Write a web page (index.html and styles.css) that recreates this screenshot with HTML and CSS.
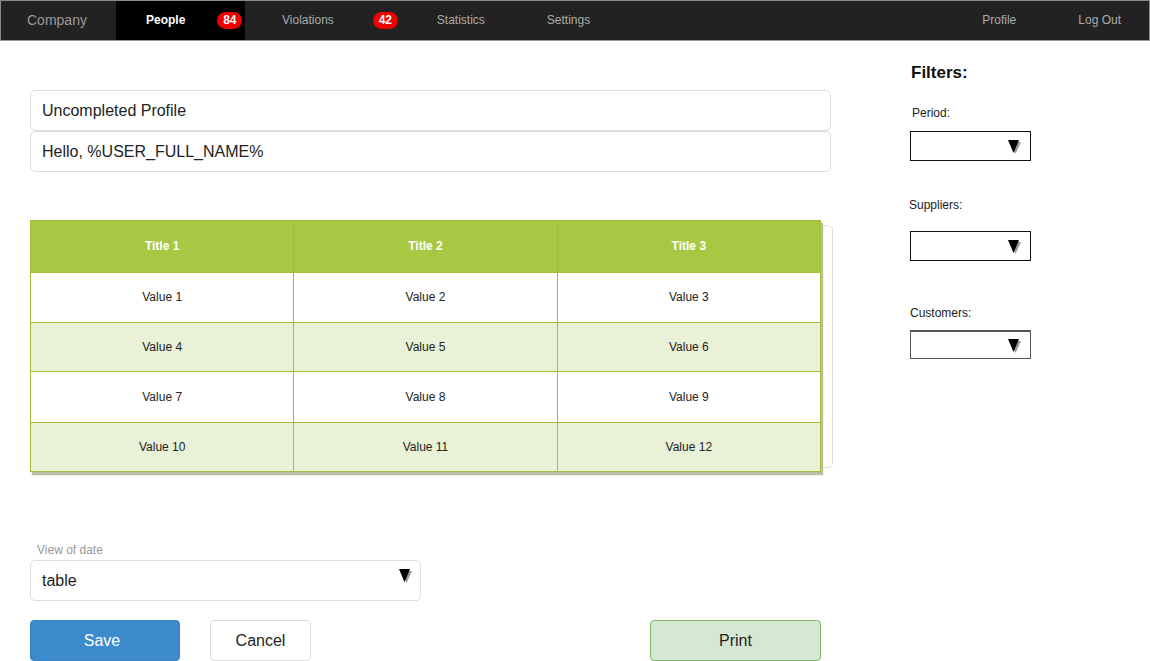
FILE: index.html
```html
<!DOCTYPE html>
<html>
<head>
<meta charset="utf-8">
<link rel="stylesheet" href="styles.css">
</head>
<body>
<nav class="nav">
  <div class="brand">Company</div>
  <div class="tab active"><span>People</span><span class="badge b1">84</span></div>
  <div class="tab t-viol"><span>Violations</span><span class="badge b2">42</span></div>
  <div class="tab t-stat">Statistics</div>
  <div class="tab t-set">Settings</div>
  <div class="spacer"></div>
  <div class="tab t-prof">Profile</div>
  <div class="tab t-out">Log Out</div>
</nav>
<div class="page">
  <main class="main">
    <div class="field first">Uncompleted Profile</div>
    <div class="field">Hello, %USER_FULL_NAME%</div>
    <div class="table-wrap">
      <table class="grid">
        <thead>
          <tr><th>Title 1</th><th>Title 2</th><th>Title 3</th></tr>
        </thead>
        <tbody>
          <tr><td>Value 1</td><td>Value 2</td><td>Value 3</td></tr>
          <tr class="alt"><td>Value 4</td><td>Value 5</td><td>Value 6</td></tr>
          <tr class="r3"><td>Value 7</td><td>Value 8</td><td>Value 9</td></tr>
          <tr class="alt"><td>Value 10</td><td>Value 11</td><td>Value 12</td></tr>
        </tbody>
      </table>
    </div>
    <div class="view-label">View of date</div>
    <div class="view-select"><span>table</span>
      <svg class="arrow" width="14" height="14" viewBox="0 0 14 14"><polygon points="2,2 13,2 7.5,14" fill="#999"/><polygon points="0,0 11,0 5.5,13" fill="#000"/></svg>
    </div>
    <div class="actions">
      <button class="btn save">Save</button>
      <button class="btn cancel">Cancel</button>
      <button class="btn print">Print</button>
    </div>
  </main>
  <aside class="filters">
    <h2>Filters:</h2>
    <div class="flabel l1">Period:</div>
    <div class="fselect s1"><svg class="arrow" width="14" height="14" viewBox="0 0 14 14"><polygon points="2,2 13,2 7.5,14" fill="#999"/><polygon points="0,0 11,0 5.5,13" fill="#000"/></svg></div>
    <div class="flabel l2">Suppliers:</div>
    <div class="fselect s2"><svg class="arrow" width="14" height="14" viewBox="0 0 14 14"><polygon points="2,2 13,2 7.5,14" fill="#999"/><polygon points="0,0 11,0 5.5,13" fill="#000"/></svg></div>
    <div class="flabel l3">Customers:</div>
    <div class="fselect s3"><svg class="arrow" width="14" height="14" viewBox="0 0 14 14"><polygon points="2,2 13,2 7.5,14" fill="#999"/><polygon points="0,0 11,0 5.5,13" fill="#000"/></svg></div>
  </aside>
</div>
</body>
</html>
```
FILE: styles.css
```css
* { box-sizing: border-box; }
html, body { margin: 0; padding: 0; background: #fff; }
body { font-family: "Liberation Sans", Arial, sans-serif; color: #222; width: 1150px; }

.nav {
  display: flex;
  align-items: stretch;
  height: 41px;
  background: #222;
  border: 1px solid #8a8a8a;
  border-bottom-color: #9a9a9a;
}
.brand {
  width: 115px;
  padding-left: 26px;
  padding-bottom: 1px;
  font-size: 14px;
  color: #9a9a9a;
  display: flex;
  align-items: center;
}
.tab {
  display: flex;
  align-items: center;
  padding-bottom: 1px;
  font-size: 12px;
  color: #aaa;
}
.tab.active {
  background: #000;
  width: 129px;
  padding-left: 30px;
  color: #fff;
  font-weight: bold;
}
.badge {
  background: #e00;
  color: #fff;
  font-weight: bold;
  font-size: 12px;
  height: 17px;
  width: 25px;
  border-radius: 9px;
  display: flex;
  align-items: center;
  justify-content: center;
}
.b1 { margin-left: 32px; }
.t-viol { margin-left: 37px; }
.b2 { margin-left: 39px; }
.t-stat { margin-left: 39px; }
.t-set { margin-left: 62px; }
.spacer { flex: 1; }
.t-prof { margin-right: 62px; }
.t-out { margin-right: 28px; }

.page { display: flex; }
.main { width: 880px; padding-left: 30px; }
.field {
  width: 801px;
  height: 41px;
  border: 1px solid #ddd;
  border-radius: 5px;
  padding-left: 11px;
  font-size: 16px;
  display: flex;
  align-items: center;
  color: #222;
}
.field.first { margin-top: 49px; }

.table-wrap {
  position: relative;
  margin-top: 48px;
  width: 801px;
}
.table-wrap::before {
  content: "";
  position: absolute;
  left: 0;
  top: 5px;
  width: 801px;
  height: 241px;
  border: 1px solid #ddd;
  border-radius: 5px;
}
.grid {
  position: relative;
  border-collapse: collapse;
  width: 791px;
  box-shadow: 2px 3px 1px #b9bda4;
  table-layout: fixed;
}
.grid th, .grid td {
  border: 1px solid #9fbf35;
  text-align: center;
  font-size: 12px;
}
.grid th {
  background: #a8c843;
  color: #fff;
  font-weight: bold;
  height: 52px;
  padding-bottom: 3px;
}
.grid td { height: 50px; background: #fff; color: #222; padding-bottom: 2px; }
.grid tr.alt td { background: #e9f1d6; height: 49px; }
.grid tr.r3 td { height: 51px; }

.view-label {
  margin-top: 71px;
  padding-left: 7px;
  font-size: 12px;
  color: #999;
}
.view-select {
  margin-top: 3px;
  width: 391px;
  height: 41px;
  border: 1px solid #ddd;
  border-radius: 5px;
  padding-left: 11px;
  padding-right: 7px;
  font-size: 16px;
  display: flex;
  align-items: center;
  justify-content: space-between;
}
.view-select .arrow { margin-top: -9px; }

.actions {
  display: flex;
  margin-top: 19px;
}
.btn {
  font-family: "Liberation Sans", Arial, sans-serif;
  font-size: 16px;
  height: 41px;
  border-radius: 4px;
  padding: 0;
}
.save {
  width: 150px;
  background: #3d8bcd;
  border: 1px solid #3a84c4;
  color: #fff;
  padding-right: 6px;
}
.cancel {
  width: 101px;
  margin-left: 30px;
  background: #fff;
  border: 1px solid #ddd;
  color: #222;
}
.print {
  width: 171px;
  margin-left: 339px;
  background: #d5e8d4;
  border: 1px solid #82b366;
  color: #222;
}

.filters { padding-left: 30px; }
.filters h2 {
  margin: 22px 0 0 1px;
  font-size: 17px;
  font-weight: bold;
  color: #111;
  line-height: 20px;
}
.flabel { font-size: 12px; color: #222; line-height: 14px; }
.l1 { margin-top: 23px; padding-left: 2px; }
.l2 { margin-top: 37px; margin-left: -1px; }
.l3 { margin-top: 45px; }
.fselect {
  width: 121px;
  height: 30px;
  border: 1px solid #111;
  display: flex;
  align-items: center;
  justify-content: flex-end;
  padding-right: 8px;
}
.s1 { margin-top: 11px; }
.s2 { margin-top: 19px; }
.s3 { margin-top: 10px; height: 29px; border-color: #555; border-top-width: 2px; }
.fselect .arrow { margin-top: 1px; }
```
